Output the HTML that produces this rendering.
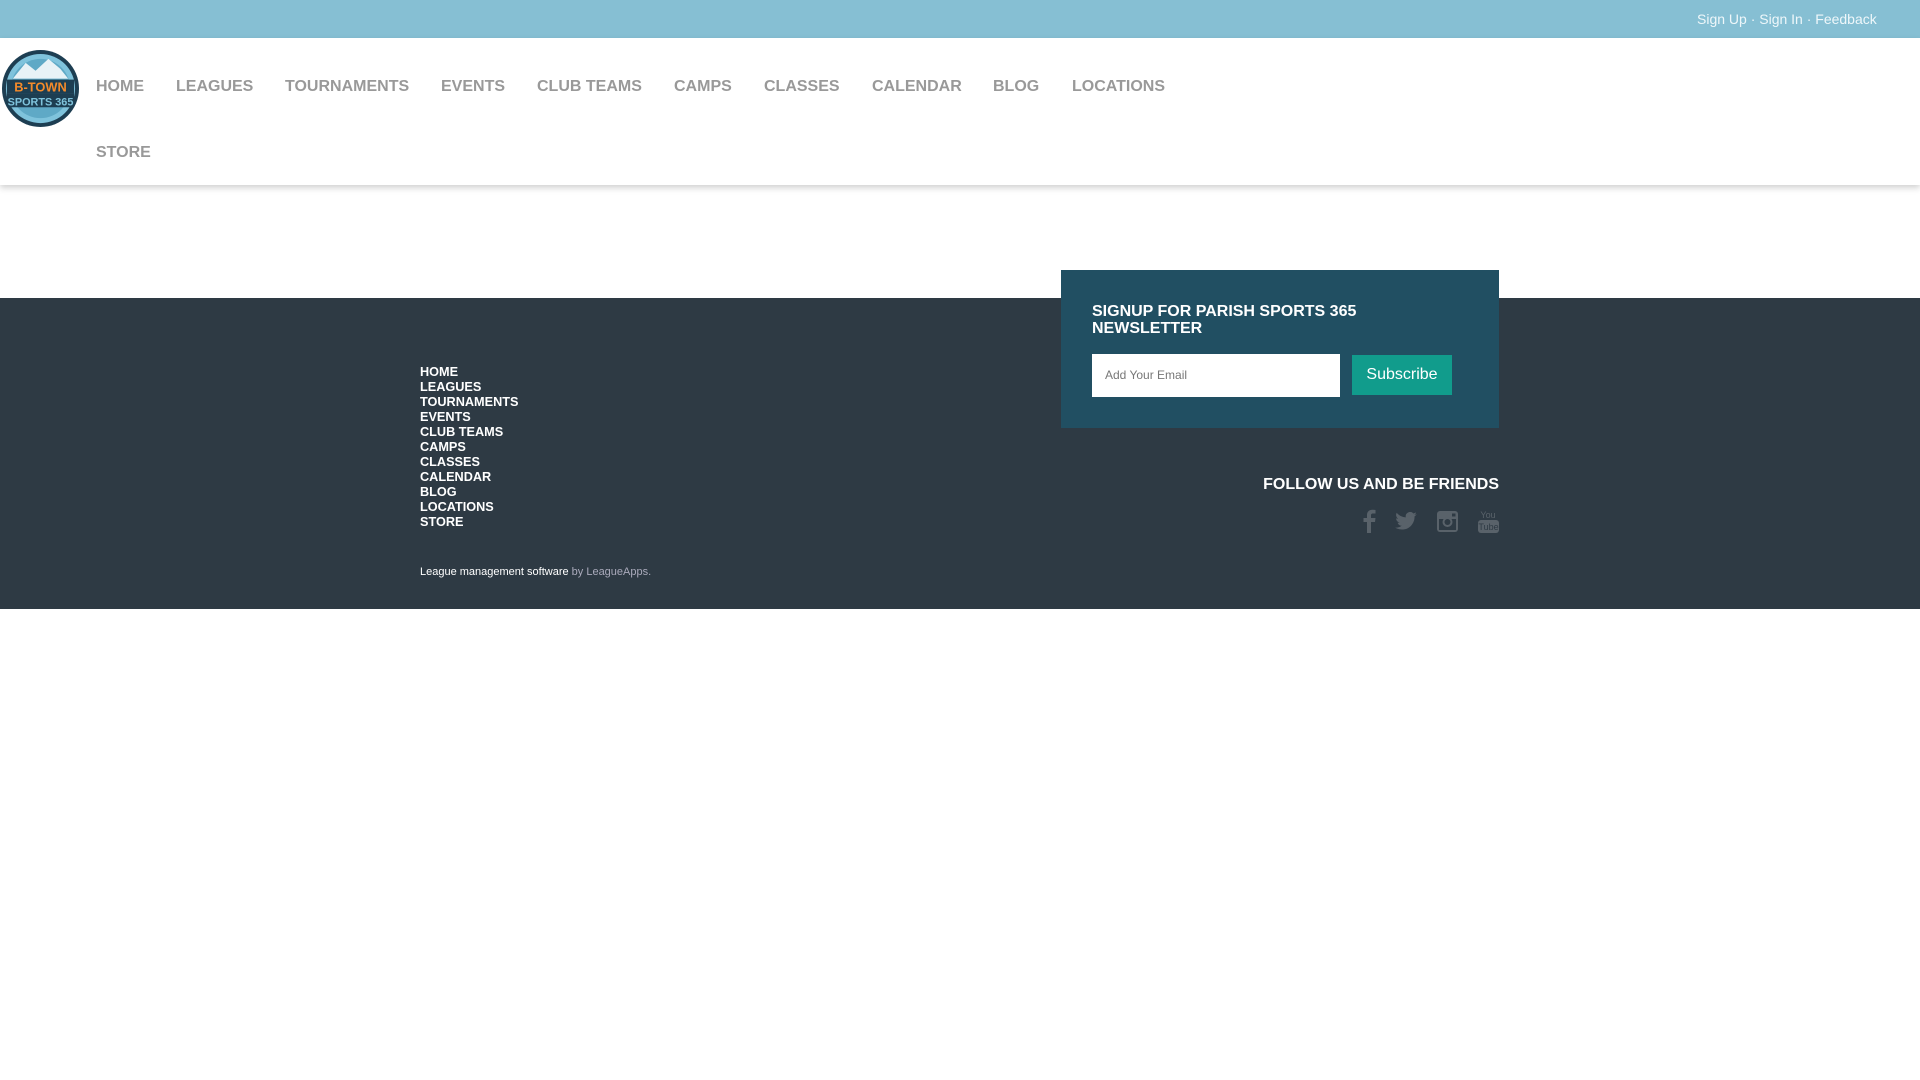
<!DOCTYPE html>
<html><head><meta charset="utf-8"><style>
*{margin:0;padding:0;box-sizing:border-box}
body{width:1920px;height:1080px;background:#fff;font-family:"Liberation Sans",sans-serif;position:relative;overflow:hidden}
.top{position:absolute;left:0;top:0;width:1920px;height:38px;background:#86bfd3;box-shadow:0 2px 3px rgba(0,0,0,.15)}
.top .l{position:absolute;left:1697px;top:11px;font-size:14px;color:#eef7fa}
.nav{position:absolute;left:0;top:38px;width:1920px;height:147px;background:#fff;box-shadow:0 3px 6px rgba(0,0,0,.18)}
.nav a{position:absolute;font-size:16px;font-weight:bold;color:#999;text-decoration:none}
.foot{position:absolute;left:0;top:298px;width:1920px;height:311px;background:#2e3a44}
.fl{position:absolute;left:420px;top:365px;font-size:12.7px;font-weight:bold;color:#fff;line-height:15px}
.tag{position:absolute;left:420px;top:566px;font-size:11px;color:#fff}
.tag span{color:#aab}
.nl{position:absolute;left:1061px;top:270px;width:438px;height:158px;background:#214f62}
.nl h3{position:absolute;left:31px;top:33px;font-size:16px;color:#fff;line-height:17px;font-weight:bold}
.nl .in{position:absolute;left:31px;top:84px;width:248px;height:43px;background:#fff;font-size:12px;color:#777;padding:14px 13px}
.nl .bt{position:absolute;left:291px;top:85px;width:100px;height:40px;background:#119c8c;color:#fff;font-size:16px;text-align:center;line-height:40px}
.fol{position:absolute;right:421px;top:476px;font-size:16px;font-weight:bold;color:#fff}
.ic{position:absolute;top:509px}
</style></head><body>
<div class="top"><div class="l">Sign Up · Sign In · Feedback</div></div>
<div class="nav">
<svg style="position:absolute;left:1px;top:11px" width="79" height="79" viewBox="0 0 80 80">
<circle cx="40" cy="40" r="39" fill="#1d3e52"/><circle cx="40" cy="40" r="35" fill="#7fc3dc"/>
<circle cx="40" cy="40" r="30" fill="#5fa9c6"/>
<path d="M12 30 L25 14 L35 22 L48 10 L60 20 L68 30Z" fill="#e8f2f6"/>
<rect x="6" y="31" width="68" height="14" fill="#1d3e52"/>
<text x="40" y="43" text-anchor="middle" font-size="13" font-weight="bold" fill="#f58a2a" font-family="Liberation Sans">B-TOWN</text>
<rect x="6" y="45" width="68" height="14" fill="#1d3e52"/>
<text x="40" y="57" text-anchor="middle" font-size="11" font-weight="bold" fill="#7fc3dc" font-family="Liberation Sans">SPORTS 365</text>
</svg>
<a style="left:96px;top:40px">HOME</a>
<a style="left:176px;top:40px">LEAGUES</a>
<a style="left:285px;top:40px">TOURNAMENTS</a>
<a style="left:441px;top:40px">EVENTS</a>
<a style="left:537px;top:40px">CLUB TEAMS</a>
<a style="left:674px;top:40px">CAMPS</a>
<a style="left:764px;top:40px">CLASSES</a>
<a style="left:872px;top:40px">CALENDAR</a>
<a style="left:993px;top:40px">BLOG</a>
<a style="left:1072px;top:40px">LOCATIONS</a>
<a style="left:96px;top:106px">STORE</a>
</div>
<div class="foot"></div>
<div class="fl">HOME<br>LEAGUES<br>TOURNAMENTS<br>EVENTS<br>CLUB TEAMS<br>CAMPS<br>CLASSES<br>CALENDAR<br>BLOG<br>LOCATIONS<br>STORE</div>
<div class="tag">League management software <span>by LeagueApps.</span></div>
<div class="nl"><h3>SIGNUP FOR PARISH SPORTS 365<br>NEWSLETTER</h3><div class="in">Add Your Email</div><div class="bt">Subscribe</div></div>
<div class="fol">FOLLOW US AND BE FRIENDS</div>
<svg class="ic" style="left:1362px" width="14" height="24" viewBox="0 0 14 24"><path d="M9 24V13h4l.5-4H9V6.5c0-1.2.4-2 2-2h2.5V1C13 1 11.700.8 10.300.8 7.300.8 5 2.700 5 6v3H1.500v4H5v11z" fill="#59626a"/></svg>
<svg class="ic" style="left:1395px;top:512px" width="22" height="18" viewBox="0 0 24 20"><path d="M24 2.4a10 10 0 0 1-2.8.8A5 5 0 0 0 23.3.4a10 10 0 0 1-3.100 1.200A4.900 4.900 0 0 0 11.800 6 14 14 0 0 1 1.700.9a4.900 4.900 0 0 0 1.500 6.600A4.900 4.900 0 0 1 1 6.900a4.900 4.900 0 0 0 3.900 4.900 4.900 4.900 0 0 1-2.200.1 4.900 4.900 0 0 0 4.600 3.400A9.900 9.900 0 0 1 0 17.300 14 14 0 0 0 7.500 19.500c9 0 14-7.500 14-14v-.6A10 10 0 0 0 24 2.400z" fill="#59626a"/></svg>
<svg class="ic" style="left:1437px;top:511px" width="21" height="21" viewBox="0 0 21 21"><rect x="0" y="0" width="21" height="21" rx="3" fill="#59626a"/><rect x="2" y="8" width="17" height="11" fill="#2e3a44"/><circle cx="10.500" cy="11" r="5" fill="#59626a"/><circle cx="10.500" cy="11" r="3" fill="#2e3a44"/><rect x="15" y="2.500" width="3.500" height="3" fill="#2e3a44"/></svg>
<svg class="ic" style="left:1478px;top:509px" width="21" height="25" viewBox="0 0 21 25"><text x="10" y="9" text-anchor="middle" font-size="9" fill="#59626a" font-family="Liberation Sans">You</text><rect x="0" y="11" width="21" height="13" rx="3" fill="#59626a"/><text x="10.500" y="21" text-anchor="middle" font-size="9" fill="#2e3a44" font-family="Liberation Sans">Tube</text></svg>
</body></html>
